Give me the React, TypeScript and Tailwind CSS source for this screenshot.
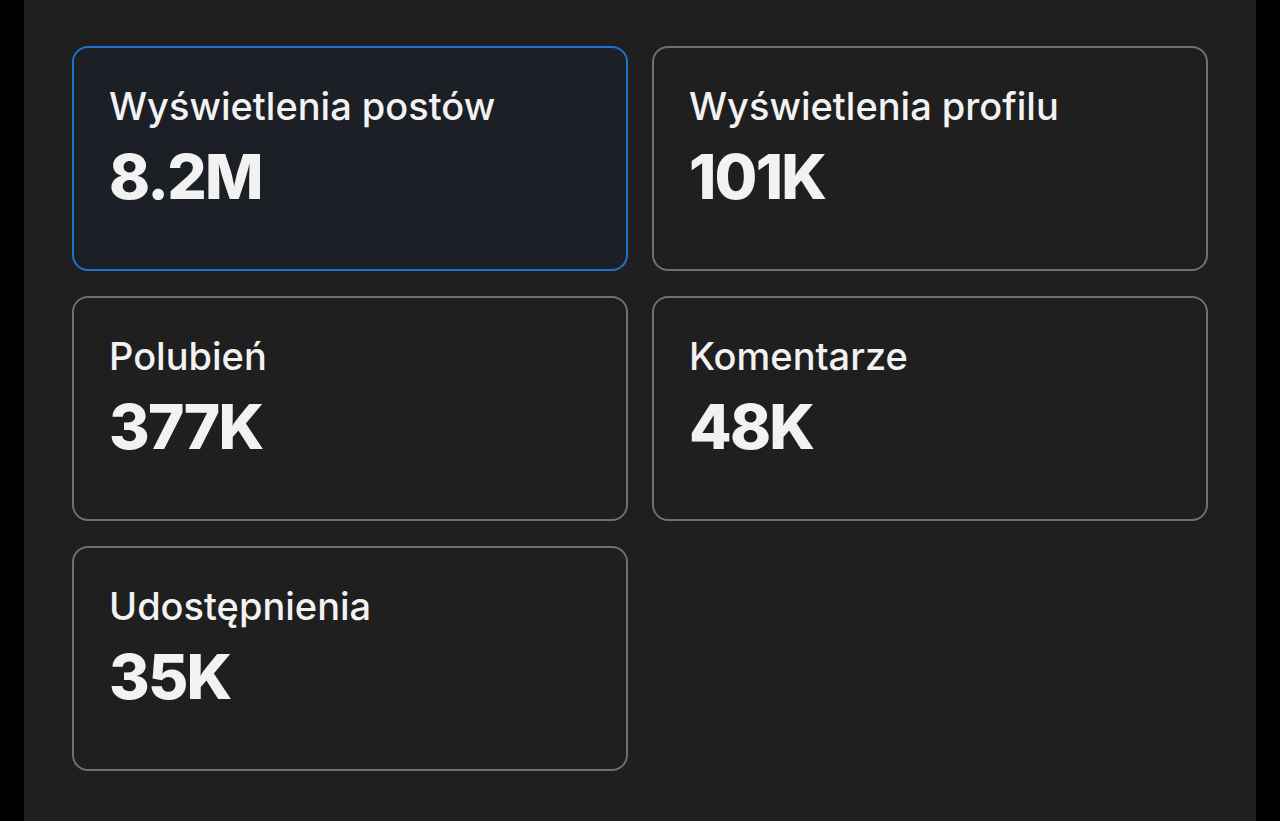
const stats = [
  { label: "Wyświetlenia postów", value: "8.2M", active: true },
  { label: "Wyświetlenia profilu", value: "101K" },
  { label: "Polubień", value: "377K" },
  { label: "Komentarze", value: "48K" },
  { label: "Udostępnienia", value: "35K" },
];

export default function App() {
  return (
    <div className="h-[821px] w-[1280px] bg-black px-[24px] overflow-hidden font-['Inter',sans-serif]">
      <div className="h-full bg-[#1f1f1f] px-[48px] pt-[46px]">
        <div className="grid grid-cols-2 gap-x-[24px] gap-y-[25px]">
          {stats.map((s) => (
            <div
              key={s.label}
              className={
                s.active
                  ? "h-[225px] rounded-[16px] border-2 border-[#1f70cf] bg-[#1c1f25] px-[35px] pt-[36px]"
                  : "h-[225px] rounded-[16px] border-2 border-[#707070] bg-[#1f1f1f] px-[35px] pt-[36px]"
              }
            >
              <div className="text-[38px] leading-[44px] font-medium text-[#f2f2f2]">
                {s.label}
              </div>
              <div className="mt-[13px] text-[62px] leading-[72px] font-extrabold tracking-[-1.8px] text-[#f2f2f2]">
                {s.value}
              </div>
            </div>
          ))}
        </div>
      </div>
    </div>
  );
}
